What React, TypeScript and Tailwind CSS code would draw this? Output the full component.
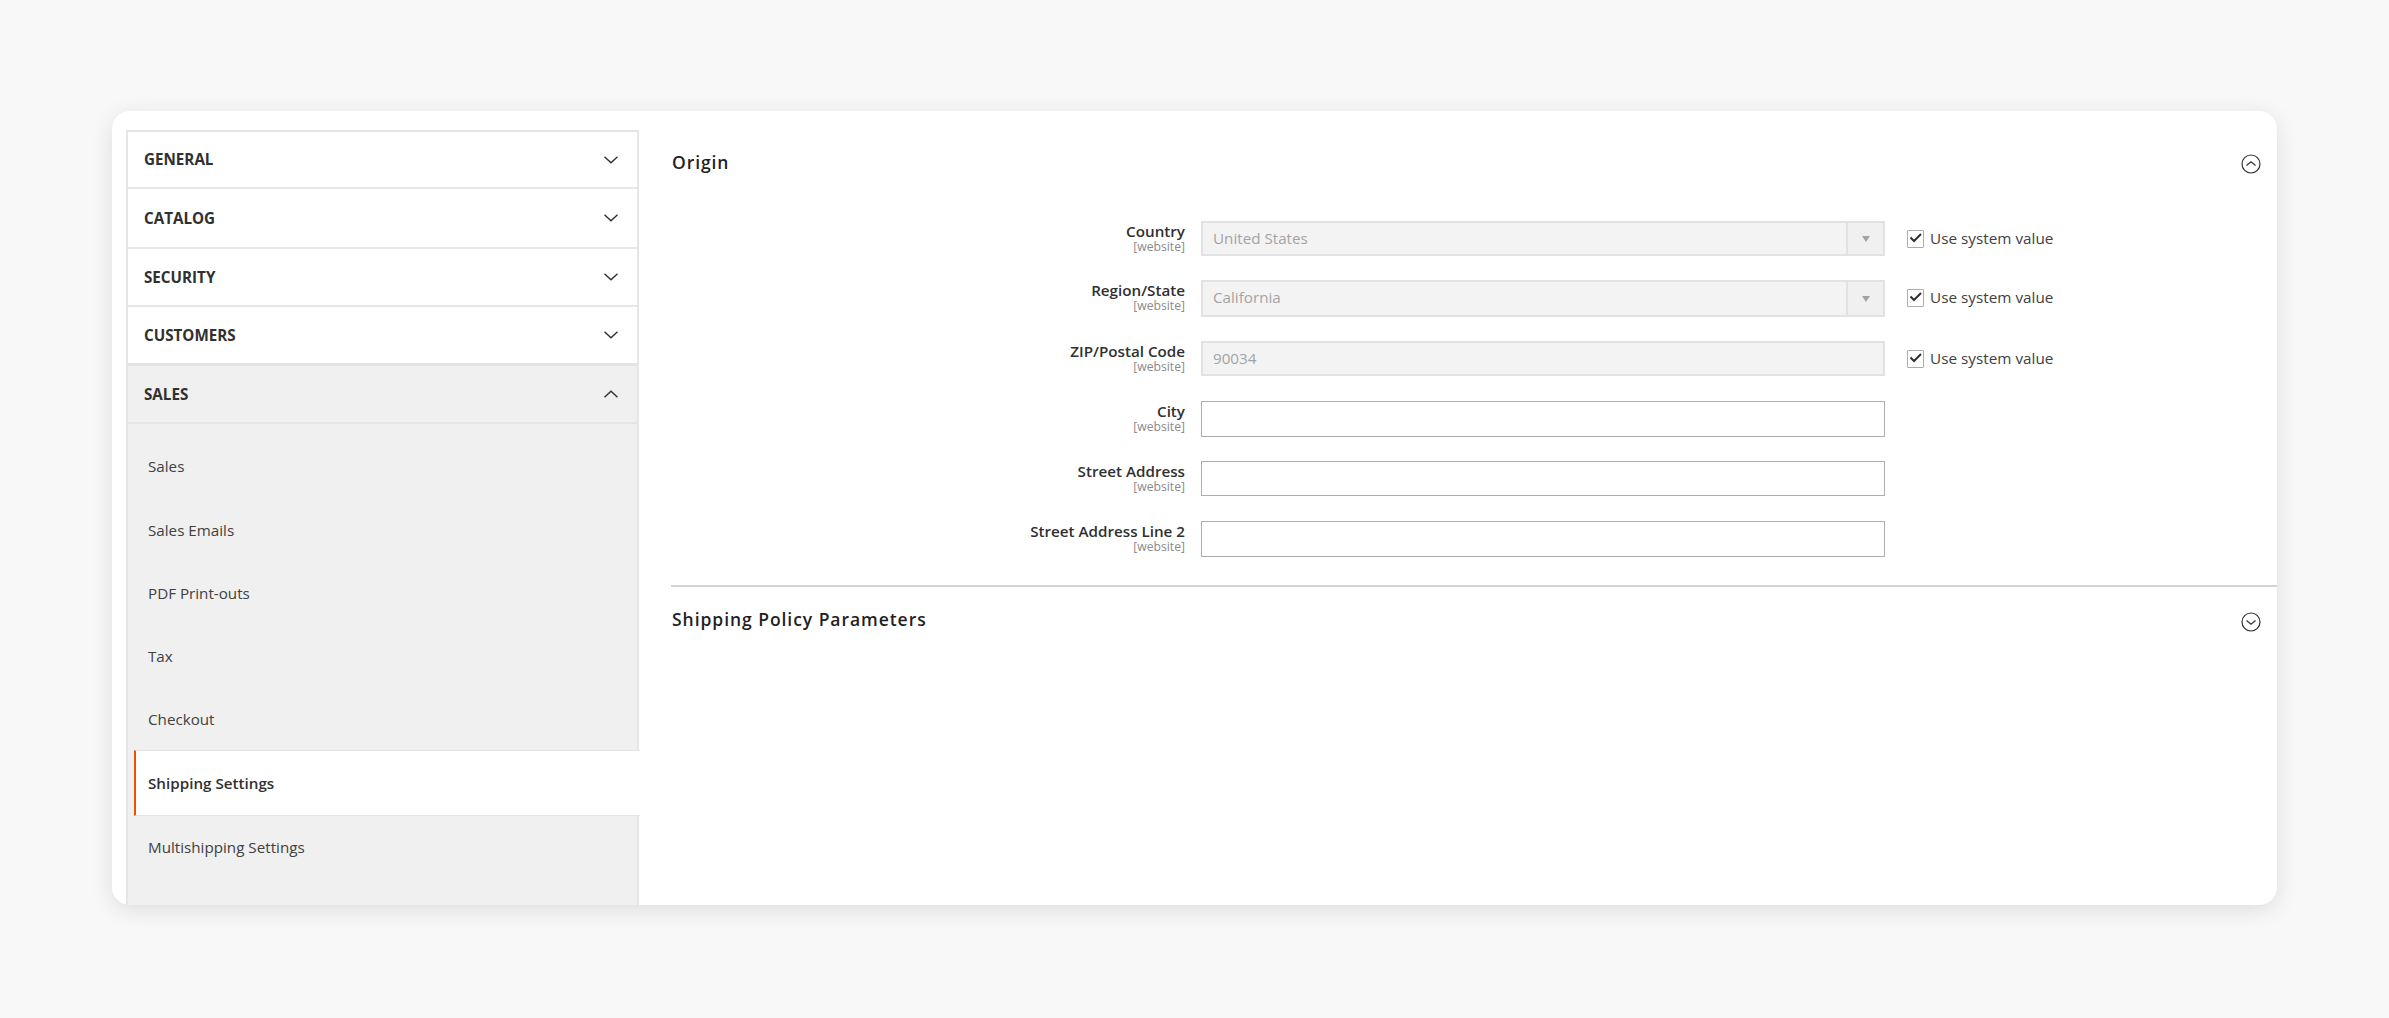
import React from "react";

const font = { fontFamily: '"Open Sans", "Noto Sans", sans-serif' };

function Chevron({ up = false }: { up?: boolean }) {
  return (
    <svg width="14" height="8" viewBox="0 0 14 8" fill="none" stroke="#303030" strokeWidth="1.4" className="shrink-0">
      <path d={up ? "M0.5 7.2 L7 1.2 L13.5 7.2" : "M0.5 0.8 L7 6.8 L13.5 0.8"} />
    </svg>
  );
}

function CircleChevron({ up = false }: { up?: boolean }) {
  return (
    <svg width="20" height="20" viewBox="0 0 20 20" fill="none" stroke="#303030" strokeWidth="1.2" className="shrink-0">
      <circle cx="10" cy="10" r="9" />
      <path d={up ? "M5.5 11.5 L10 7.8 L14.5 11.5" : "M5.5 8.5 L10 12.2 L14.5 8.5"} />
    </svg>
  );
}

function NavHead({ label, cls, up = false }: { label: string; cls: string; up?: boolean }) {
  return (
    <div className={`flex items-center justify-between pl-[16px] pr-[19px] ${cls}`}>
      <span className="text-[15.2px] leading-[20px] -mt-[1px] font-bold text-[#303030]">{label}</span>
      <Chevron up={up} />
    </div>
  );
}

function SubItem({ label }: { label: string }) {
  return (
    <div className="h-[63.3px] pl-[20px] flex items-center text-[15.2px] text-[#41403f]">{label}</div>
  );
}

function Label({ name }: { name: string }) {
  return (
    <div className="w-[514px] shrink-0 flex flex-col items-end pt-[1px]">
      <span className="text-[15.2px] leading-[18px] font-semibold text-[#303030]">{name}</span>
      <span className="text-[12.2px] leading-[13px] text-[#8a8a8a]">[website]</span>
    </div>
  );
}

function SystemValue() {
  return (
    <div className="ml-[22px] flex items-center gap-[6px]">
      <div className="w-[17px] h-[18px] border border-[#adadad] rounded-[1px] bg-white flex items-center justify-center">
        <svg width="13" height="11" viewBox="0 0 13 11" fill="none" stroke="#303030" strokeWidth="2">
          <path d="M1.5 4.5 L5 8 L12 1" />
        </svg>
      </div>
      <span className="text-[15.3px] text-[#41403f]">Use system value</span>
    </div>
  );
}

function SelectRow({ name, value, cls, lift }: { name: string; value: string; cls: string; lift?: boolean }) {
  return (
    <div className={`flex items-start ${cls}`}>
      <Label name={name} />
      <div className="ml-4 w-[684px] h-full border-2 border-[#e2e2e2] bg-[#f3f3f3] flex">
        <div className={lift ? "flex-1 flex items-center pl-[10px] pb-[2px] text-[15.2px] text-[#a3a3a3]" : "flex-1 flex items-center pl-[10px] text-[15.2px] text-[#a3a3a3]"}>{value}</div>
        <div className="w-[37px] border-l-2 border-[#e2e2e2] bg-[#f0f0f0] flex items-center justify-center">
          <div className="w-0 h-0 border-x-[4px] border-x-transparent border-t-[6px] border-t-[#a3a3a3]" />
        </div>
      </div>
      <div className={lift ? "h-full pb-[2px] flex items-center" : "h-full flex items-center"}>
        <SystemValue />
      </div>
    </div>
  );
}

function TextRow({ name, cls }: { name: string; cls: string }) {
  return (
    <div className={`flex items-start ${cls}`}>
      <Label name={name} />
      <div className="ml-4 w-[684px] h-full border border-[#adadad] bg-white" />
    </div>
  );
}

export default function App() {
  return (
    <div style={font} className="w-full h-[1018px] bg-[#f8f8f8] pt-[111px] pl-[112px] overflow-hidden">
      <div className="w-[2165px] h-[794px] bg-white rounded-[18px] shadow-[0_5px_22px_rgba(0,0,0,0.11)] overflow-hidden flex">
        <div className="ml-[14px] mt-[19px] w-[513px] h-[900px] shrink-0 border-x-2 border-[#e6e6e6] bg-[#f0f0f0]">
          <div className="bg-white border-t-2 border-[#e6e6e6]">
            <NavHead label="GENERAL" cls="h-[57px] border-b-2 border-[#e6e6e6]" />
            <NavHead label="CATALOG" cls="h-[60px] border-b-2 border-[#e6e6e6]" />
            <NavHead label="SECURITY" cls="h-[58px] border-b-2 border-[#e6e6e6]" />
            <NavHead label="CUSTOMERS" cls="h-[59px] border-b-[3px] border-[#e3e3e3]" />
          </div>
          <NavHead label="SALES" cls="h-[58px] border-b-2 border-[#e6e6e6]" up />
          <div className="pt-[11px]">
            <SubItem label="Sales" />
            <SubItem label="Sales Emails" />
            <SubItem label="PDF Print-outs" />
            <SubItem label="Tax" />
            <div className="h-[62px] pl-[20px] flex items-center text-[15.2px] text-[#41403f]">Checkout</div>
            <div className="h-[66px] ml-[6px] -mr-[3px] pl-[12px] flex items-center bg-white border-l-2 border-l-[#eb5202] border-y border-y-[#e3e3e3] text-[15.2px] font-semibold text-[#303030]">
              Shipping Settings
            </div>
            <SubItem label="Multishipping Settings" />
            <SubItem label="Delivery Methods" />
          </div>
        </div>
        <div className="flex-1 min-w-0 pl-[32px] pt-[38px]">
          <div className="h-[28px] flex items-center justify-between pr-[16px]">
            <span className="ml-[1px] -mt-[2px] text-[17.5px] font-semibold tracking-[0.9px] text-[#1f1f1f]">Origin</span>
            <span className="mt-[2px]"><CircleChevron up /></span>
          </div>
          <div className="mt-[44px]">
            <SelectRow name="Country" value="United States" cls="h-[35px]" />
            <div className="mt-[24px]">
              <SelectRow name="Region/State" value="California" cls="h-[37px]" lift />
            </div>
            <div className="mt-[24px] flex items-start h-[35px]">
              <Label name="ZIP/Postal Code" />
              <div className="ml-4 w-[684px] h-full border-2 border-[#e2e2e2] bg-[#f3f3f3] flex items-center pl-[10px] text-[15.2px] text-[#a3a3a3]">
                90034
              </div>
              <div className="h-full flex items-center">
                <SystemValue />
              </div>
            </div>
            <div className="mt-[25px]">
              <TextRow name="City" cls="h-[36px]" />
            </div>
            <div className="mt-[24px]">
              <TextRow name="Street Address" cls="h-[35px]" />
            </div>
            <div className="mt-[25px]">
              <TextRow name="Street Address Line 2" cls="h-[36px]" />
            </div>
          </div>
          <div className="mt-[28px] h-[2px] bg-[#d4d4d4]" />
          <div className="mt-[20px] h-[28px] flex items-center justify-between pr-[16px]">
            <span className="ml-[1px] -mt-[4px] text-[17.5px] font-semibold tracking-[0.95px] text-[#1f1f1f]">Shipping Policy Parameters</span>
            <span className="mt-[2px]"><CircleChevron /></span>
          </div>
        </div>
      </div>
    </div>
  );
}
